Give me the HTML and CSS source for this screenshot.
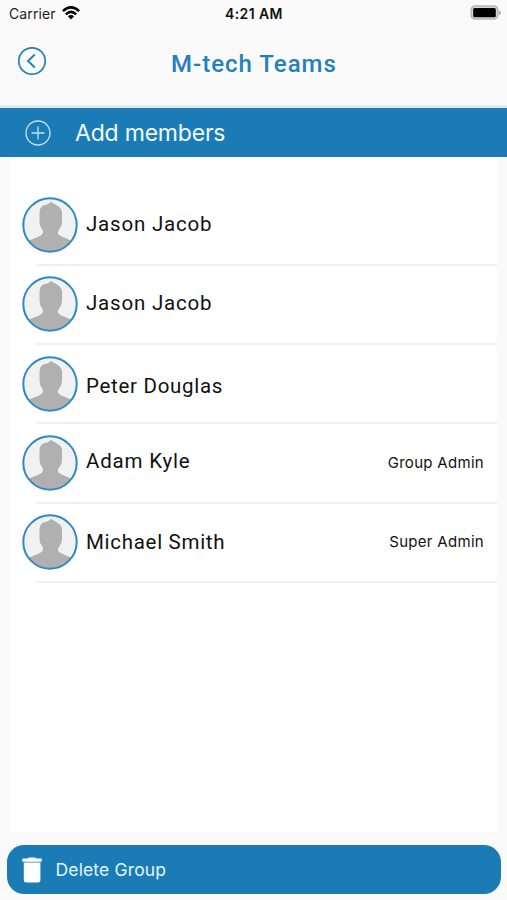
FILE: index.html
```html
<!DOCTYPE html>
<html lang="en">
<head>
<meta charset="utf-8">
<title>M-tech Teams</title>
<link rel="stylesheet" href="styles.css">
</head>
<body>
<svg class="defs" width="0" height="0">
  <symbol id="avatar" viewBox="0 0 56 56">
    <clipPath id="disc"><circle cx="28" cy="28" r="27"/></clipPath>
    <circle cx="28" cy="28" r="27" fill="#f1f1f1"/>
    <path clip-path="url(#disc)" fill="#b0b0b0" d="M29 5 L35 8.500 Q40 11 40 16 V25 Q40 29 37.500 32 Q34.500 35.500 37 38 Q40 40 46 42.200 L56 47 V56 H0 V47 L10 42.200 Q17 40 20 37.500 Q22 35 20 32 Q17.500 29 17.500 25 V16 Q17.500 10 22 8.300 L26 7.300 Z"/>
    <circle cx="28" cy="28" r="26.700" fill="none" stroke="#3289c3" stroke-width="2"/>
  </symbol>
</svg>
<div class="status">
  <span class="carrier">Carrier</span>
  <svg class="wifi" viewBox="0 0 18 14"><path fill="none" stroke="#000" stroke-width="2.500" d="M.9 5.100Q9-2.400 17.100 5.100M3.800 8.300Q9 3.500 14.200 8.300"/><path d="M5.900 10.300Q9 7.700 12.100 10.300L9 13.500Z"/></svg>
  <span class="clock">4:21 AM</span>
  <svg class="battery" viewBox="0 0 32 16"><rect x="1.300" y="1.200" width="26.400" height="12.800" rx="3.500" fill="#d8d8d8" stroke="#b9b9b9" stroke-width="1.700"/><rect x="3.200" y="3" width="22.600" height="9.300" rx="1.500"/><path d="M29 5.200Q33 7.700 29 10.200Z" fill="#aaa"/></svg>
</div>
<header class="header">
  <svg class="back" viewBox="0 0 30 30" fill="none" stroke="#2480bb"><circle cx="15" cy="15" r="13.200" stroke-width="1.700"/><path d="M17.800 8.500 11 15l6.800 6.500" stroke-width="1.900"/></svg>
  <h1 class="title">M-tech Teams</h1>
</header>
<div class="add">
  <svg class="plus" viewBox="0 0 26 26" fill="none" stroke="#bfe2f5" stroke-width="1.300"><circle cx="13" cy="13" r="12"/><path d="M13 6.500v13M6.500 13h13"/></svg>
  <span class="add-label">Add members</span>
</div>
<main class="list">
  <div class="row"><svg class="avatar"><use href="#avatar"/></svg><span class="name jason">Jason Jacob</span></div>
  <div class="row"><svg class="avatar"><use href="#avatar"/></svg><span class="name jason">Jason Jacob</span></div>
  <div class="row"><svg class="avatar"><use href="#avatar"/></svg><span class="name peter">Peter Douglas</span></div>
  <div class="row"><svg class="avatar"><use href="#avatar"/></svg><span class="name adam">Adam Kyle</span><span class="role">Group Admin</span></div>
  <div class="row"><svg class="avatar"><use href="#avatar"/></svg><span class="name michael">Michael Smith</span><span class="role">Super Admin</span></div>
</main>
<div class="delete">
  <svg class="trash" viewBox="0 0 20 26" fill="#fff"><path d="M6 1.500Q6 .5 7 .5h6q1 0 1 1h5q.7 0 .7.700v2q0 .5-.5.500H.8q-.5 0-.5-.5v-2q0-.7.700-.7ZM1.800 5.500h16.600v17.500q0 2.500-2.500 2.500H4.300q-2.500 0-2.500-2.500Z"/></svg>
  <span class="delete-label">Delete Group</span>
</div>
</body>
</html>
```
FILE: styles.css
```css
* { box-sizing: border-box; }
body {
  margin: 0;
  height: 900px;
  overflow: hidden;
  background: #fafafa;
  color: #111;
  font-family: Inter, "Liberation Sans", sans-serif;
}
svg { display: block; flex: none; }
.defs { position: absolute; }
.status {
  display: grid;
  grid-template-columns: 53px 172px 1fr 37px;
  height: 28px;
  padding-left: 9px;
  align-items: center;
  white-space: nowrap;
}
.carrier { margin-top: -2px; font-size: 14px; letter-spacing: 0.1px; color: #222; }
.wifi { width: 18px; height: 14px; margin-top: -2px; }
.clock { margin: -2px 0 0 -9px; font-size: 14px; font-weight: 600; letter-spacing: 0.4px; }
.battery { width: 32px; height: 16px; margin-top: -2px; }
.header {
  display: grid;
  grid-template-columns: 154px 1fr;
  height: 80px;
  padding-left: 17px;
  border-bottom: 3px solid #e6e6e6;
}
.back { width: 30px; height: 30px; margin-top: 18px; }
.title {
  margin: 21px 0 0;
  font: 500 24px/30px Roboto, sans-serif;
  letter-spacing: 1px;
  color: #2480bb;
}
.add {
  display: flex;
  align-items: center;
  height: 49px;
  padding-left: 25px;
  background: #1b7cb5;
  color: #f2faff;
}
.plus { width: 26px; height: 26px; }
.add-label { margin-left: 24px; font-size: 23px; letter-spacing: -0.2px; }
.list {
  width: 488px;
  height: 675px;
  margin-left: 9px;
  padding: 28.500px 0 0 13px;
  background: #fff;
}
.row {
  position: relative;
  display: flex;
  align-items: center;
  height: 79.300px;
}
.row::after {
  content: "";
  position: absolute;
  left: 14px;
  right: 0;
  bottom: -1px;
  height: 2px;
  background: #f0f0f0;
}
.avatar { width: 56px; height: 56px; }
.name {
  margin-left: 8px;
  font: 400 20.500px/26px Roboto, sans-serif;
  letter-spacing: 0.800px;
  white-space: nowrap;
}
.role {
  margin: -2px 13px 0 auto;
  font-size: 15px;
  letter-spacing: 0.300px;
  white-space: nowrap;
}
.jason { margin-top: -2px; }
.peter { padding-top: 4px; letter-spacing: 0.700px; }
.adam { padding-bottom: 4px; }
.michael { letter-spacing: 0.700px; }
.delete {
  display: flex;
  align-items: center;
  width: 494px;
  height: 49px;
  margin: 13px 0 0 7px;
  padding-left: 14.500px;
  border-radius: 17px;
  background: #1b7cb5;
  color: #e3f5ff;
}
.trash { width: 20px; height: 26px; }
.delete-label { margin-left: 14px; font-size: 17.500px; letter-spacing: 0.15px; }
```
